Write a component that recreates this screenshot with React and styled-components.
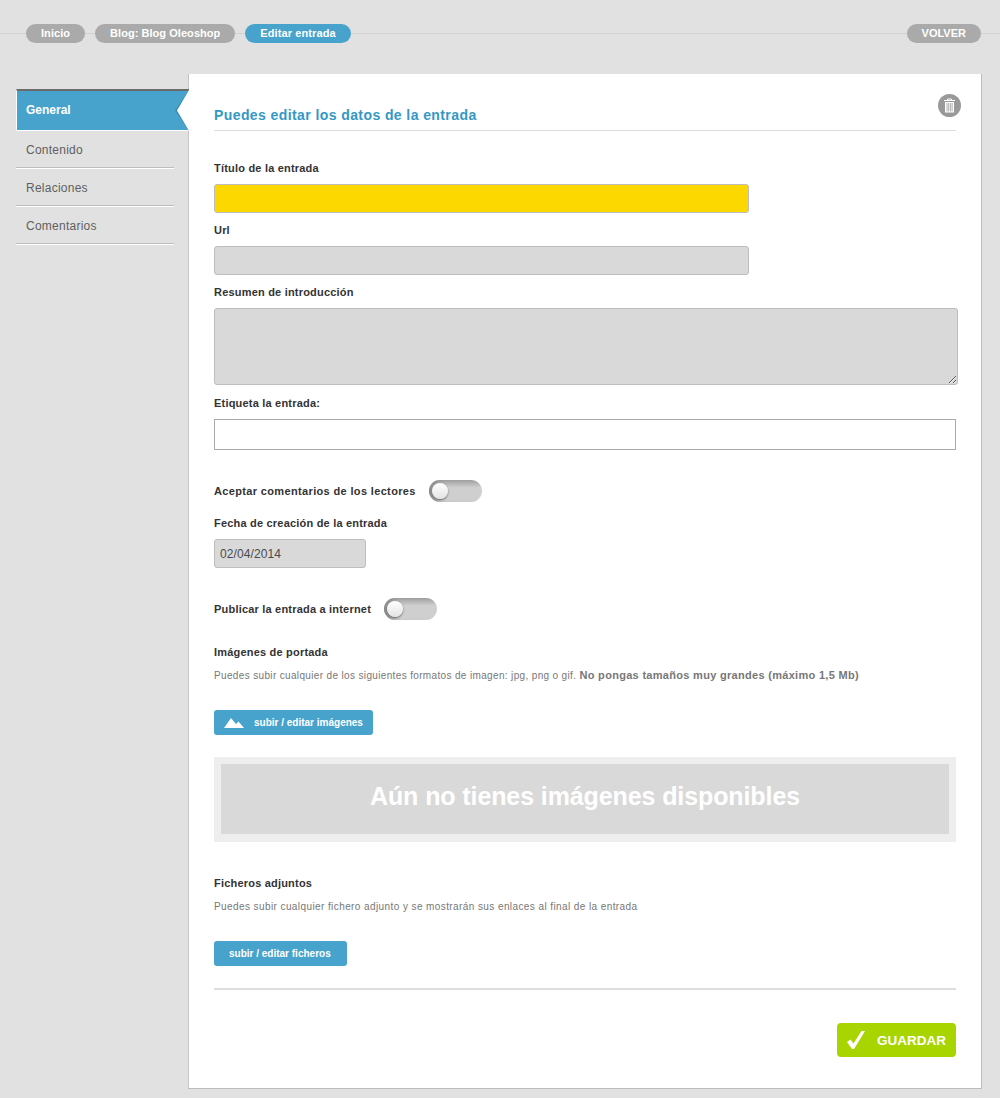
import React from 'react';
import styled, { createGlobalStyle } from 'styled-components';

const Global = createGlobalStyle`
  html, body { margin: 0; padding: 0; background: #e1e1e1; }
  body { font-family: "Liberation Sans", Arial, sans-serif; }
  * { box-sizing: border-box; }
`;
const Page = styled.div`
  width: 1000px; height: 1098px; background: #e1e1e1; overflow: hidden;
`;
const Header = styled.header`
  height: 74px; padding: 24px 19px 0 26px; display: flex; gap: 10px; align-items: flex-start;
  background: linear-gradient(#d2d2d2, #d2d2d2) 0 33px / 100% 1px no-repeat;
`;
const Pill = styled.a`
  height: 19px; line-height: 19px; padding: 0 15px; border-radius: 10px;
  background: ${p => (p.$active ? '#47a3cc' : '#aaaaaa')};
  color: #fff; font-size: 11px; font-weight: 700;
  letter-spacing: ${p => (p.$active ? '0.1px' : p.$end ? '0' : '0.05px')};
  ${p => p.$end && 'margin-left: auto;'}
`;
const Main = styled.div`
  display: flex; padding-left: 16px; align-items: flex-start;
`;
const Side = styled.nav`
  width: 172px; padding-top: 15px; flex: none;
`;
const Tab = styled.div`
  position: relative; height: 42px; line-height: 39px; padding-left: 9px; width: 173px; z-index: 2;
  background: #47a3cc; color: #fff; font-size: 12px; font-weight: 700;
  border-top: 2px solid #6b6b6b; border-left: 1px solid #fff; border-bottom: 1px solid #fff;
  &::before {
    content: ""; position: absolute; right: 0; top: -1px; bottom: -1px; width: 14px;
    background: #3a8cb0; clip-path: polygon(100% 0, 0 50%, 100% 100%);
  }
  &::after {
    content: ""; position: absolute; right: 0; top: -1px; bottom: -1px; width: 12px;
    background: #fff; clip-path: polygon(100% 0, 0 50%, 100% 100%);
  }
`;
const Item = styled.div`
  width: 158px; height: ${p => (p.$first ? 37 : 38)}px; line-height: ${p => (p.$first ? 37 : 38)}px;
  padding: 1px 0 0 10px;
  color: #5f5f5f; font-size: 12px; letter-spacing: 0.25px;
  border-bottom: 1px solid #bdbdbd; box-shadow: 0 1px 0 #fff;
`;
const Panel = styled.main`
  position: relative; width: 794px; height: 1015px; background: #fff;
  border: 1px solid #bcbcbc; border-top: 0; border-left: 1px solid #c4c4c4;
  padding: 0 25px;
`;
const Title = styled.h2`
  margin: 0; height: 57px; padding-top: 32px; line-height: 18px; font-size: 14px; font-weight: 700;
  letter-spacing: 0.41px; color: #3498c4; border-bottom: 1px solid #dcdcdc;
`;
const Trash = styled.button`
  position: absolute; right: 20px; top: 20px; width: 23px; height: 23px; border-radius: 50%;
  border: 0; padding: 0; background: #999; display: flex; align-items: center; justify-content: center;
`;
const Label = styled.label`
  display: block; font-size: 11px; font-weight: 700; line-height: 14px; color: #333;
  letter-spacing: 0.2px; margin-top: ${p => p.$top}px;
`;
const Field = styled.input`
  display: block; width: ${p => p.$w}px; height: 29px; margin-top: 9px;
  background: ${p => p.$bg || '#d9d9d9'}; border: 1px solid #bdbdbd; border-radius: 3px;
  padding: 0 5px; font: 12px "Liberation Sans", Arial, sans-serif; letter-spacing: 0.1px; color: #4a4a4a; outline: none;
`;
const Area = styled.textarea`
  display: block; width: 744px; height: 77px; margin-top: 9px; background: #d9d9d9;
  border: 1px solid #bdbdbd; border-radius: 3px; padding: 5px; outline: none;
`;
const Plain = styled.input`
  display: block; width: 742px; height: 31px; margin-top: 9px; background: #fff;
  border: 1px solid #aaa; border-radius: 0; outline: none;
`;
const ToggleRow = styled.div`
  display: flex; align-items: center; gap: 13px; height: 22px; margin-top: ${p => p.$top}px;
`;
const RowLabel = styled.span`
  font-size: 11px; font-weight: 700; color: #333; letter-spacing: ${p => p.$ls}px;
`;
const Toggle = styled.span`
  position: relative; display: block; width: 53px; height: 22px; border-radius: 11px;
  background: linear-gradient(#a0a0a0, #cfcfcf 35%);
  box-shadow: inset 8px 0 6px -5px #777;
  &::after {
    content: ""; position: absolute; left: 3px; top: 3px; width: 16px; height: 16px; border-radius: 50%;
    background: linear-gradient(#fff, #e4e4e4); box-shadow: 0 1px 2px rgba(0,0,0,.5);
  }
`;
const Help = styled.p`
  margin: ${p => p.$top}px 0 0; font-size: 10px; line-height: 14px; color: #777; letter-spacing: ${p => p.$ls}px;
  & b { font-size: 11px; letter-spacing: 0.3px; }
`;
const Upload = styled.button`
  display: flex; align-items: center; gap: 10px; width: ${p => p.$w}px; height: 25px; border: 0; border-radius: 3px;
  margin-top: ${p => p.$top}px; padding: 0 0 0 ${p => p.$pad}px; background: #47a3cc; color: #fff;
  font: 700 10px "Liberation Sans", Arial, sans-serif;
`;
const EmptyBox = styled.div`
  margin-top: 22px; height: 85px; background: #eeeeee; padding: 7px;
`;
const EmptyInner = styled.div`
  height: 70px; padding-bottom: 6px; background: #d9d9d9; color: #fff; font-size: 25px; font-weight: 700;
  letter-spacing: -0.1px; display: flex; align-items: center; justify-content: center;
`;
const Rule = styled.hr`
  margin: 22px 0 0; border: 0; height: 2px; background: #dddddd;
`;
const Footer = styled.div`
  display: flex; justify-content: flex-end; margin-top: 33px;
`;
const Save = styled.button`
  display: flex; align-items: center; gap: 12px; width: 119px; height: 34px; padding: 0 0 0 9px; border: 0;
  border-radius: 4px; background: #a8d400; color: #fff; font: 700 13.500px "Liberation Sans", Arial, sans-serif;
`;

export default function App() {
  return (
    <Page>
      <Global />
      <Header>
        <Pill>Inicio</Pill>
        <Pill>Blog: Blog Oleoshop</Pill>
        <Pill $active>Editar entrada</Pill>
        <Pill $end>VOLVER</Pill>
      </Header>
      <Main>
        <Side>
          <Tab>General</Tab>
          <Item $first>Contenido</Item>
          <Item>Relaciones</Item>
          <Item>Comentarios</Item>
        </Side>
        <Panel>
          <Title>Puedes editar los datos de la entrada</Title>
          <Trash aria-label="Eliminar">
            <svg width="13" height="15" viewBox="0 0 13 15" fill="none">
              <path d="M1 2.500h11M4.500 2.500V1h4v1.500" stroke="#fff" strokeWidth="1" />
              <path d="M2 4h9v10.500H2z" fill="#fff" />
              <path d="M4 5v8.500M5.700 5v8.500M7.400 5v8.500M9.100 5v8.500" stroke="#999" strokeWidth="0.8" />
            </svg>
          </Trash>
          <Label $top={30}>Título de la entrada</Label>
          <Field $w={535} $bg="#fdd800" />
          <Label $top={10}>Url</Label>
          <Field $w={535} />
          <Label $top={10}>Resumen de introducción</Label>
          <Area />
          <Label $top={11}>Etiqueta la entrada:</Label>
          <Plain />
          <ToggleRow $top={30}>
            <RowLabel $ls={0.35}>Aceptar comentarios de los lectores</RowLabel>
            <Toggle />
          </ToggleRow>
          <Label $top={14}>Fecha de creación de la entrada</Label>
          <Field $w={152} defaultValue="02/04/2014" />
          <ToggleRow $top={30}>
            <RowLabel $ls={0.2}>Publicar la entrada a internet</RowLabel>
            <Toggle />
          </ToggleRow>
          <Label $top={25}>Imágenes de portada</Label>
          <Help $top={9} $ls={0.35}>
            Puedes subir cualquier de los siguientes formatos de imagen: jpg, png o gif. <b>No pongas tamaños muy grandes (máximo 1,5 Mb)</b>
          </Help>
          <Upload $top={27} $pad={10} $w={159}>
            <svg width="20" height="10" viewBox="0 0 20 10"><path d="M0 10 7 0l5 6 2.500-2.500L20 10z" fill="#fff" /></svg>
            subir / editar imágenes
          </Upload>
          <EmptyBox><EmptyInner>Aún no tienes imágenes disponibles</EmptyInner></EmptyBox>
          <Label $top={34}>Ficheros adjuntos</Label>
          <Help $top={10} $ls={0.41}>Puedes subir cualquier fichero adjunto y se mostrarán sus enlaces al final de la entrada</Help>
          <Upload $top={27} $pad={15} $w={133}>subir / editar ficheros</Upload>
          <Rule />
          <Footer>
            <Save>
              <svg width="19" height="18" viewBox="0 0 19 18"><path d="M1 11 4.500 8.500 7.500 12.500 15.500 0H19L8 18H6z" fill="#fff" /></svg>
              GUARDAR
            </Save>
          </Footer>
        </Panel>
      </Main>
    </Page>
  );
}
